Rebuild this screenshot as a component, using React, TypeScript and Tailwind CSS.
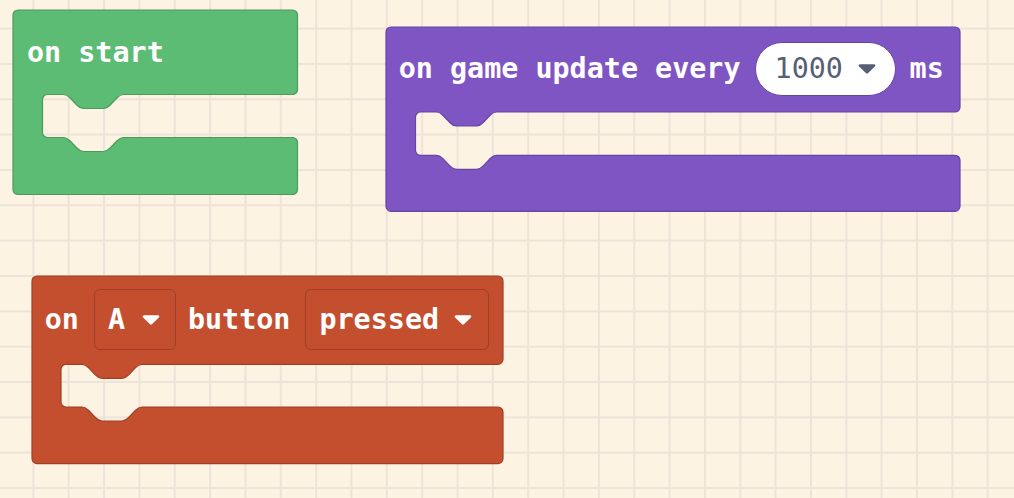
import type { ReactNode } from "react";

// notch used by the statement input (scaled pxt-style)
function notch(dir: 1 | -1, w = 60, h = 14) {
    const sx = (w / 36) * dir;
    const sy = h / 8;
    const p = (x: number, y: number) => `${(x * sx).toFixed(2)},${(y * sy).toFixed(2)}`;
    return `c ${p(2, 0)} ${p(3, 1)} ${p(4, 2)} l ${p(4, 4)} c ${p(1, 1)} ${p(2, 2)} ${p(4, 2)} h ${(12 * sx).toFixed(2)} c ${p(2, 0)} ${p(3, -1)} ${p(4, -2)} l ${p(4, -4)} c ${p(1, -1)} ${p(2, -2)} ${p(4, -2)}`;
}

function cBlockPath(w: number, h1: number, m: number, h2: number, inner: number, r = 5, n0 = 21) {
    const h = h1 + m + h2;
    const nw = 60;
    return [
        `M ${r},0`,
        `H ${w - r}`,
        `A ${r} ${r} 0 0 1 ${w},${r}`,
        `V ${h1 - r}`,
        `A ${r} ${r} 0 0 1 ${w - r},${h1}`,
        `H ${inner + n0 + nw}`,
        notch(-1),
        `H ${inner + r}`,
        `A ${r} ${r} 0 0 0 ${inner},${h1 + r}`,
        `V ${h1 + m - r}`,
        `A ${r} ${r} 0 0 0 ${inner + r},${h1 + m}`,
        `H ${inner + n0}`,
        notch(1),
        `H ${w - r}`,
        `A ${r} ${r} 0 0 1 ${w},${h1 + m + r}`,
        `V ${h - r}`,
        `A ${r} ${r} 0 0 1 ${w - r},${h}`,
        `H ${r}`,
        `A ${r} ${r} 0 0 1 0,${h - r}`,
        `V ${r}`,
        `A ${r} ${r} 0 0 1 ${r},0`,
        "Z",
    ].join(" ");
}

interface BlockProps {
    className: string;
    rowClass: string;
    w: number;
    h1: number;
    m: number;
    h2: number;
    inner: number;
    fill: string;
    stroke: string;
    children: ReactNode;
}

function Block({ className, rowClass, w, h1, m, h2, inner, fill, stroke, children }: BlockProps) {
    const h = h1 + m + h2;
    return (
        <div className={`absolute ${className}`}>
            <svg className="absolute left-0 top-0 overflow-visible" width={w} height={h}>
                <path d={cBlockPath(w, h1, m, h2, inner)} fill={fill} stroke={stroke} strokeWidth={1.2} />
            </svg>
            <div className={`relative flex items-center text-white ${rowClass}`}>{children}</div>
        </div>
    );
}

function Caret({ color = "#ffffff" }: { color?: string }) {
    return (
        <svg width="18" height="10" viewBox="0 0 18 10" className="shrink-0">
            <path d="M2 1.6 H16 L9 8.4 Z" fill={color} stroke={color} strokeWidth="2.6" strokeLinejoin="round" />
        </svg>
    );
}

export default function App() {
    return (
        <div
            className={
                "relative h-[498px] w-[1014px] overflow-hidden bg-[#fdf3e3] font-['DejaVu_Sans_Mono',monospace] text-[28.4px] font-bold leading-none " +
                "bg-[linear-gradient(to_right,#ede3d8_2px,transparent_2px),linear-gradient(to_bottom,#ede3d8_2px,transparent_2px)] " +
                "bg-[length:35.35px_35.35px] bg-[position:32.4px_27.6px]"
            }
        >
            {/* on start */}
            <Block
                className="left-[13px] top-[9.5px] h-[184.5px] w-[284.5px]"
                rowClass="h-[84.5px] pl-[14px] pt-[2px]"
                w={284.5}
                h1={84.5}
                m={43}
                h2={57}
                inner={29.5}
                fill="#5cbc74"
                stroke="#4a9a5e"
            >
                <span className="whitespace-pre">on start</span>
            </Block>

            {/* on game update every */}
            <Block
                className="left-[385.7px] top-[26.7px] h-[184.3px] w-[574px]"
                rowClass="h-[85px] pl-[13px]"
                w={574}
                h1={85}
                m={43.3}
                h2={56}
                inner={29.5}
                fill="#7f55c4"
                stroke="#6544a2"
            >
                <span className="whitespace-pre">on game update every</span>
                <div className="ml-[14px] flex h-[54px] w-[141px] items-center rounded-full border border-[#6544a2] bg-white pl-[19px] pr-[19px]">
                    <span className="font-normal text-[#575e75]">1000</span>
                    <span className="ml-auto">
                        <Caret color="#575e75" />
                    </span>
                </div>
                <span className="ml-[14px]">ms</span>
            </Block>

            {/* on A button pressed */}
            <Block
                className="left-[31.7px] top-[275.7px] h-[187.6px] w-[471px]"
                rowClass="h-[88.3px] pl-[13px]"
                w={471}
                h1={88.3}
                m={42.7}
                h2={56.6}
                inner={29}
                fill="#c44f2f"
                stroke="#a03f26"
            >
                <span>on</span>
                <div className="ml-[15px] flex h-[61px] w-[82px] items-center rounded-[6px] border border-[#a03f26] pl-[13px]">
                    <span>A</span>
                    <span className="ml-[17px]">
                        <Caret />
                    </span>
                </div>
                <span className="ml-[12px]">button</span>
                <div className="ml-[15px] flex h-[61px] w-[184px] items-center rounded-[6px] border border-[#a03f26] pl-[13px]">
                    <span>pressed</span>
                    <span className="ml-auto mr-[16px]">
                        <Caret />
                    </span>
                </div>
            </Block>
        </div>
    );
}
